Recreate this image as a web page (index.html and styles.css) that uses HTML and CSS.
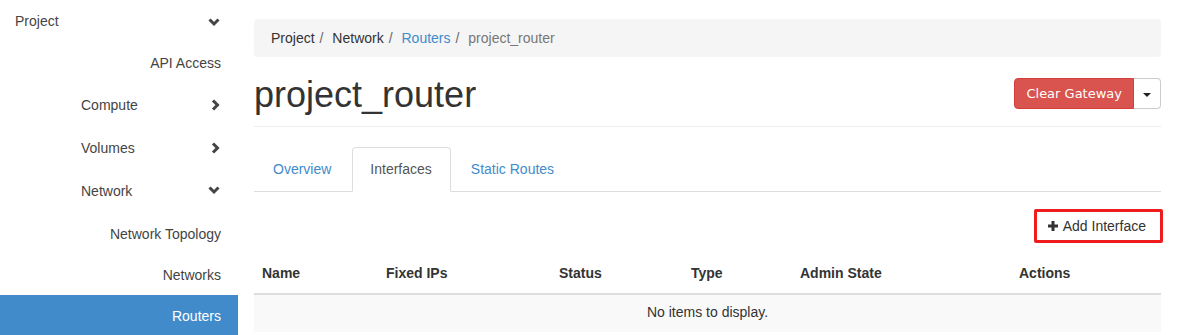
FILE: index.html
```html
<!DOCTYPE html>
<html>
<head>
  <meta charset="utf-8">
  <link rel="stylesheet" href="styles.css">
</head>
<body>
<div class="layout">
  <div class="sidebar">
    <div class="nav-row dashboard">
      <span>Project</span>
      <svg class="chev" width="12" height="9" viewBox="0 0 12 9"><polyline points="1.5,1.5 6,6 10.5,1.5"/></svg>
    </div>
    <div class="nav-row leaf first">API Access</div>
    <div class="nav-row group">
      <span>Compute</span>
      <svg class="chev" width="9" height="12" viewBox="0 0 9 12"><polyline points="2,1.5 6.5,6 2,10.5"/></svg>
    </div>
    <div class="nav-row group">
      <span>Volumes</span>
      <svg class="chev" width="9" height="12" viewBox="0 0 9 12"><polyline points="2,1.5 6.5,6 2,10.5"/></svg>
    </div>
    <div class="nav-row group">
      <span>Network</span>
      <svg class="chev" width="12" height="9" viewBox="0 0 12 9"><polyline points="1.5,1.5 6,6 10.5,1.5"/></svg>
    </div>
    <div class="nav-row leaf sub-first">Network Topology</div>
    <div class="nav-row leaf short">Networks</div>
    <div class="nav-row leaf short active">Routers</div>
  </div>

  <div class="main">
    <ol class="breadcrumb">
      <li>Project</li>
      <li>Network</li>
      <li><a href="#">Routers</a></li>
      <li class="current">project_router</li>
    </ol>

    <div class="page-header">
      <h1>project_router</h1>
      <div class="btn-group">
        <button class="btn-danger">Clear Gateway</button>
        <button class="btn-caret"><span class="caret"></span></button>
      </div>
    </div>

    <ul class="nav-tabs">
      <li><a href="#">Overview</a></li>
      <li class="active"><a href="#">Interfaces</a></li>
      <li><a href="#">Static Routes</a></li>
    </ul>

    <div class="table-actions">
      <button class="btn-add">
        <svg class="plus" width="10" height="10" viewBox="0 0 10 10"><rect x="3.5" y="0" width="3" height="10"/><rect x="0" y="3.5" width="10" height="3"/></svg>
        Add Interface
      </button>
    </div>

    <table class="data-table">
      <thead>
        <tr>
          <th class="c-name">Name</th>
          <th class="c-ips">Fixed IPs</th>
          <th class="c-status">Status</th>
          <th class="c-type">Type</th>
          <th class="c-admin">Admin State</th>
          <th class="c-actions">Actions</th>
        </tr>
      </thead>
      <tbody>
        <tr class="empty">
          <td colspan="6">No items to display.</td>
        </tr>
      </tbody>
    </table>
  </div>
</div>
</body>
</html>
```

FILE: styles.css
```css
body {
  margin: 0;
  font-family: "Liberation Sans", Arial, sans-serif;
  font-size: 14px;
  line-height: 20px;
  color: #333;
  background: #fff;
}
a {
  color: #428bca;
  text-decoration: none;
}
.layout {
  display: flex;
  height: 335px;
  overflow: hidden;
}

/* sidebar */
.sidebar {
  width: 238px;
  flex: none;
}
.nav-row {
  display: flex;
  align-items: center;
  height: 43px;
  color: #444;
}
.nav-row.dashboard {
  height: 41px;
  padding: 0 18px 0 15px;
  justify-content: space-between;
}
.nav-row.dashboard .chev {
  margin-top: 4px;
}
.nav-row.group {
  padding: 0 18px 0 81px;
  justify-content: space-between;
}
.nav-row.leaf {
  justify-content: flex-end;
  padding-right: 17px;
}
.nav-row.first,
.nav-row.sub-first {
  height: 40px;
  padding-top: 2px;
}
.nav-row.short {
  height: 41px;
}
.nav-row.active {
  background: #428bca;
  color: #fff;
}
.chev polyline {
  fill: none;
  stroke: #444;
  stroke-width: 3;
}

/* main */
.main {
  width: 907px;
  padding: 0 16px;
}
.breadcrumb {
  display: flex;
  list-style: none;
  margin: 19px 0 0;
  padding: 9px 17px;
  background: #f5f5f5;
  border-radius: 4px;
}
.breadcrumb li + li:before {
  content: "/\00a0";
  padding: 0 5px;
  color: #666;
}
.breadcrumb .current {
  color: #777;
}
.page-header {
  display: flex;
  justify-content: space-between;
  align-items: flex-start;
  margin-top: 18px;
  padding-bottom: 11px;
  border-bottom: 1px solid #eee;
}
.page-header h1 {
  margin: 0;
  font-size: 36px;
  font-weight: normal;
  line-height: 40px;
}
.btn-group {
  display: flex;
  margin-top: 3px;
}
.btn-group button {
  font-family: "DejaVu Sans", sans-serif;
  font-size: 13px;
  line-height: 17px;
  padding: 6px 11px;
  cursor: pointer;
}
.btn-danger {
  background: #d9534f;
  border: 1px solid #d43f3a;
  color: #fff;
  border-radius: 4px 0 0 4px;
}
.btn-group .btn-caret {
  background: #fff;
  border: 1px solid #ccc;
  border-left: none;
  border-radius: 0 4px 4px 0;
  padding: 6px 9px;
}
.caret {
  display: inline-block;
  width: 0;
  height: 0;
  border-top: 4px solid #222;
  border-left: 4px solid transparent;
  border-right: 4px solid transparent;
  vertical-align: middle;
}

/* tabs */
.nav-tabs {
  display: flex;
  list-style: none;
  margin: 20px 0 0;
  padding: 0;
  border-bottom: 1px solid #ddd;
}
.nav-tabs li {
  margin-right: 2px;
  margin-bottom: -1px;
}
.nav-tabs a {
  display: block;
  padding: 11px 17px 12px;
  border: 1px solid transparent;
  border-radius: 4px 4px 0 0;
}
.nav-tabs li:first-child a {
  padding-left: 18px;
  padding-right: 18px;
}
.nav-tabs .active a {
  color: #555;
  background: #fff;
  border-color: #ddd;
  border-bottom-color: #fff;
  padding-right: 18px;
}

/* table */
.table-actions {
  display: flex;
  justify-content: flex-end;
  margin-top: 17px;
  margin-right: -2px;
}
.btn-add {
  display: flex;
  align-items: center;
  height: 34px;
  padding: 0 14px 0 11px;
  background: #fff;
  border: 3px solid #ee1c1c;
  border-radius: 2px;
  font-family: "Liberation Sans", Arial, sans-serif;
  font-size: 14px;
  color: #333;
  cursor: pointer;
}
.plus {
  fill: #333;
  margin-right: 5px;
}
.data-table {
  width: 100%;
  margin-top: 14px;
  border-collapse: collapse;
  table-layout: fixed;
}
.data-table th {
  box-sizing: border-box;
  text-align: left;
  font-weight: bold;
  padding: 6px 8px 10px;
  border-bottom: 2px solid #ddd;
}
.c-name { width: 124px; }
.c-ips { width: 173px; }
.c-status { width: 132px; }
.c-type { width: 109px; }
.c-admin { width: 219px; }
.c-actions { width: 150px; }
.data-table .empty td {
  background: #f9f9f9;
  text-align: center;
  padding: 7px 8px 9px;
  line-height: 21px;
}
```
